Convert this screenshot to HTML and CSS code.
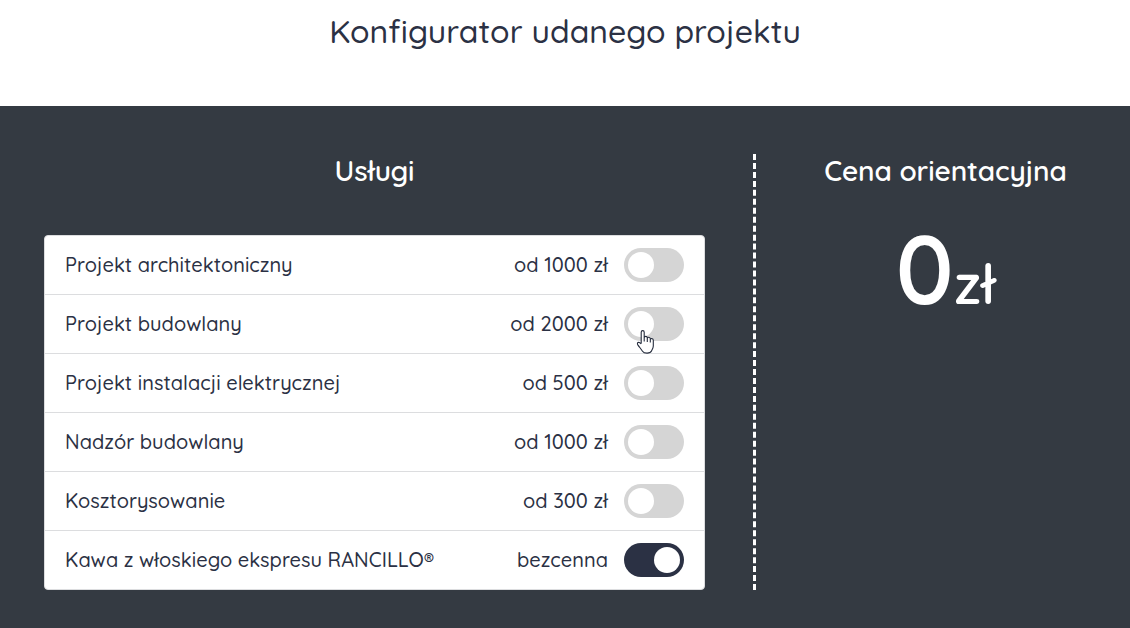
FILE: index.html
```html
<!DOCTYPE html>
<html lang="pl">
<head>
<meta charset="utf-8">
<title>Konfigurator udanego projektu</title>
<link rel="stylesheet" href="styles.css">
</head>
<body>
<header class="page-header"><h1 class="title">Konfigurator udanego projektu</h1></header>
<main class="configurator">
  <section class="services">
    <h2 class="heading">Usługi</h2>
    <ul class="list">
      <li class="item"><span class="name">Projekt architektoniczny</span><span class="price">od 1000 zł</span><span class="switch"></span></li>
      <li class="item"><span class="name">Projekt budowlany</span><span class="price">od 2000 zł</span><span class="switch"></span>
        <svg class="pointer" width="20" height="26" viewBox="0 0 20 26"><path d="M5.2 14.5V3.2C5.2 1.1 8.2 1.1 8.2 3.2V9C8.2 6.8 11.3 6.8 11.3 9V9.8C11.3 7.7 14.3 7.9 14.3 10V10.8C14.5 9 17.3 9.2 17.3 11.3V17C17.3 19 16.3 20.4 15.5 22C14.3 24.8 8.2 24.9 6.5 22.2C5 19.8 3.4 18.2 2 16.1C.4 13.5 2.5 12.3 5.2 14.8M8.2 9V12.5M11.3 9.5V13M14.3 10.5V13.5"/></svg>
      </li>
      <li class="item"><span class="name">Projekt instalacji elektrycznej</span><span class="price">od 500 zł</span><span class="switch"></span></li>
      <li class="item"><span class="name">Nadzór budowlany</span><span class="price">od 1000 zł</span><span class="switch"></span></li>
      <li class="item"><span class="name">Kosztorysowanie</span><span class="price">od 300 zł</span><span class="switch"></span></li>
      <li class="item"><span class="name">Kawa z włoskiego ekspresu RANCILLO®</span><span class="price">bezcenna</span><span class="switch on"></span></li>
    </ul>
  </section>
  <section class="summary">
    <h2 class="heading">Cena orientacyjna</h2>
    <p class="total"><span class="amount">0</span><span class="currency">zł</span></p>
  </section>
</main>
</body>
</html>
```
FILE: styles.css
```css
* { box-sizing: border-box; }
body {
  margin: 0;
  background: #fff;
  color: #2b3144;
  font-family: Quicksand, Inter, "Open Sans", sans-serif;
  overflow: hidden;
}
.page-header { height: 106px; padding-top: 11px; text-align: center; }
.title { margin: 0; font-size: 32px; line-height: 40px; font-weight: 500; letter-spacing: 0.07px; white-space: nowrap; }
.configurator {
  display: flex;
  align-items: stretch;
  height: 522px;
  padding: 48px 0 38px 44px;
  background: #343a42;
}
.services { width: 661px; margin-right: 48px; }
.heading {
  margin: 0;
  height: 81px;
  color: #fff;
  font-size: 28px;
  line-height: 34px;
  font-weight: 600;
  letter-spacing: -0.12px;
  text-align: center;
  white-space: nowrap;
}
.list {
  margin: 0;
  padding: 0;
  list-style: none;
  background: #fff;
  border: 1px solid #dcdddf;
  border-radius: 4px;
}
.item {
  position: relative;
  display: flex;
  align-items: center;
  height: 59px;
  padding: 0 20px;
  border-bottom: 1px solid #dcdddf;
  font-size: 20px;
  line-height: 30px;
  font-weight: 500;
  letter-spacing: 0.04px;
  white-space: nowrap;
}
.item:last-child { height: 58px; border-bottom: 0; }
.price { margin-left: auto; }
.switch {
  width: 60px;
  height: 34px;
  margin-left: 16px;
  padding: 4px;
  border-radius: 17px;
  background: #d5d5d5;
}
.switch::before {
  content: "";
  display: block;
  width: 26px;
  height: 26px;
  border-radius: 50%;
  background: #fff;
}
.switch.on { background: #2b3144; }
.switch.on::before { margin-left: auto; }
.pointer { position: absolute; left: 591px; top: 34px; fill: #fff; stroke: #252c3d; stroke-width: 1.1; }
.summary { flex: 1; padding-left: 5px; border-left: 3px dashed #fff; }
.total { margin: 0; color: #fff; text-align: center; line-height: 66px; font-weight: 600; }
.amount { font-size: 96px; }
.currency { font-size: 56px; }
```
